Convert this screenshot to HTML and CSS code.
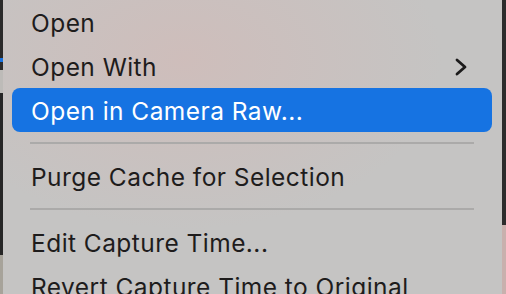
FILE: index.html
```html
<!DOCTYPE html>
<html lang="en">
<head>
    <meta charset="UTF-8">
    <title>Context Menu</title>
    <link rel="stylesheet" href="styles.css">
</head>
<body>
    <div class="screen">
        <div class="edge edge-left"></div>
        <ul class="menu">
            <li class="menu-item">Open</li>
            <li class="menu-item has-sub">
                <span>Open With</span>
                <svg class="chevron" width="12" height="18" viewBox="0 0 12 18">
                    <polyline points="2,2 10,9 2,16" fill="none" stroke="#1c1b1b" stroke-width="2.8" stroke-linecap="round" stroke-linejoin="round"/>
                </svg>
            </li>
            <li class="menu-item active">Open in Camera Raw...</li>
            <li class="separator"></li>
            <li class="menu-item">Purge Cache for Selection</li>
            <li class="separator"></li>
            <li class="menu-item">Edit Capture Time...</li>
            <li class="menu-item">Revert Capture Time to Original</li>
        </ul>
        <div class="edge edge-right"></div>
    </div>
</body>
</html>
```

FILE: styles.css
```css
body {
    margin: 0;
    padding: 0;
    overflow: hidden;
    background-color: #262626;
    font-family: 'Inter', 'Noto Sans', sans-serif;
}

.screen {
    display: flex;
    height: 294px;
}

.edge {
    background-color: #262626;
}

.edge-left {
    width: 3px;
    background: linear-gradient(to bottom, #2a2a2a 0, #2a2a2a 58px, #1a73e0 58px, #1a73e0 62px, #2b2b2b 62px, #2b2b2b 70px, #bdbbb8 70px, #bdbbb8 93px, #262626 93px, #262626 255px, #a7a39a 255px);
}

.edge-right {
    width: 4px;
    background: linear-gradient(to bottom, #2c2c2c 0, #2c2c2c 225px, #c9b0ad 225px);
}

.menu {
    list-style: none;
    margin: 0;
    padding: 0;
    width: 499px;
    background:
        radial-gradient(ellipse 260px 170px at 180px 60px, rgba(214, 184, 180, 0.55), rgba(214, 184, 180, 0) 100%),
        #c5c4c3;
}

.menu-item {
    display: flex;
    align-items: center;
    justify-content: space-between;
    height: 44px;
    margin: 0 10px 0 9px;
    padding: 2px 25px 0 19px;
    box-sizing: border-box;
    border-radius: 8px;
    font-size: 24.5px;
    letter-spacing: 0.45px;
    color: #1e1c1c;
    white-space: nowrap;
}

.menu-item.active {
    background-color: #1673e2;
    color: #ffffff;
}

.chevron {
    margin-top: -1px;
}

.separator {
    height: 2px;
    margin: 10px 28px 10px 27px;
    background-color: #abaaa9;
}
```
